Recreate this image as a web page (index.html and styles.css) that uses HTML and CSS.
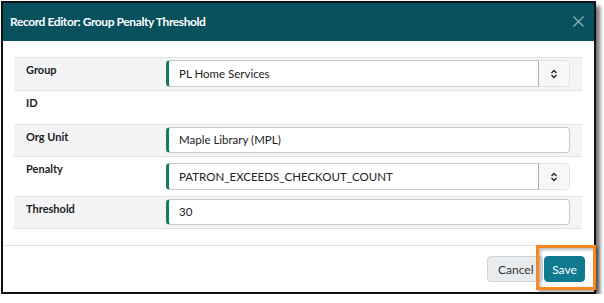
FILE: index.html
```html
<!DOCTYPE html>
<html lang="en">
<head>
  <meta charset="UTF-8" />
  <title>Record Editor</title>
  <link rel="stylesheet" href="styles.css">
</head>
<body>

<div class="dialog">
  <div class="dialog-header">
    <div class="dialog-title">Record Editor: Group Penalty Threshold</div>
    <svg class="close" width="11" height="11" viewBox="0 0 11 11">
      <path d="M0.5 0.5 L10.5 10.5 M10.5 0.5 L0.5 10.5" stroke="#8fb0b6" stroke-width="1.3" fill="none"/>
    </svg>
  </div>

  <div class="dialog-body">
    <div class="row shaded">
      <div class="label">Group</div>
      <div class="field">
        <div class="select">
          <div class="control">PL Home Services</div>
          <div class="spin">
            <svg width="8" height="10" viewBox="0 0 8 10">
              <path d="M1.5 4 L4 1.5 L6.5 4 M1.5 6 L4 8.5 L6.5 6" stroke="#222" stroke-width="1.4" fill="none"/>
            </svg>
          </div>
        </div>
      </div>
    </div>
    <div class="row tall">
      <div class="label">ID</div>
      <div class="field"></div>
    </div>
    <div class="row shaded short">
      <div class="label">Org Unit</div>
      <div class="field">
        <div class="control">Maple Library (MPL)</div>
      </div>
    </div>
    <div class="row penalty">
      <div class="label">Penalty</div>
      <div class="field">
        <div class="select">
          <div class="control">PATRON_EXCEEDS_CHECKOUT_COUNT</div>
          <div class="spin">
            <svg width="8" height="10" viewBox="0 0 8 10">
              <path d="M1.5 4 L4 1.5 L6.5 4 M1.5 6 L4 8.5 L6.5 6" stroke="#222" stroke-width="1.4" fill="none"/>
            </svg>
          </div>
        </div>
      </div>
    </div>
    <div class="row shaded short">
      <div class="label">Threshold</div>
      <div class="field">
        <div class="control">30</div>
      </div>
    </div>
  </div>

  <div class="dialog-footer">
    <button class="btn btn-cancel">Cancel</button>
    <div class="save-wrap">
      <button class="btn btn-save">Save</button>
      <span class="highlight"></span>
    </div>
  </div>
</div>

</body>
</html>
```

FILE: styles.css
```css
body {
  margin: 0;
  background: #fff;
  font-family: Lato, "Liberation Sans", sans-serif;
  color: #212529;
}

.dialog {
  box-sizing: border-box;
  width: 595px;
  height: 293px;
  margin: 1px 0 0 1px;
  border: 2px solid #111;
  background: #fff;
  box-shadow: 4px 5px 4px rgba(0, 0, 0, 0.55);
  display: flex;
  flex-direction: column;
}

.dialog-header {
  height: 38px;
  background-color: #07505d;
  display: flex;
  align-items: center;
  justify-content: space-between;
  padding: 0 10px 0 7px;
}

.dialog-title {
  color: #fff;
  font-weight: bold;
  font-size: 12px;
  letter-spacing: -0.4px;
  margin-top: -2px;
}

.close {
  margin-top: -1px;
}

.dialog-body {
  padding: 16px 12px 16px 11px;
}

.row {
  display: flex;
  border-top: 1px solid #dfe2e6;
  height: 32px;
  align-items: flex-start;
}

.row:last-child {
  border-bottom: 1px solid #dfe2e6;
}

.row.shaded {
  background-color: #f3f4f6;
}

.row.short {
  height: 31px;
}

.row.tall {
  height: 33px;
}

.row.penalty {
  height: 39px;
}

.label {
  width: 140px;
  padding: 5px 0 0 12px;
  font-weight: bold;
  font-size: 11px;
  color: #222;
}

.field {
  flex: 1;
  padding: 2px 12px 0 0;
}

.row.penalty .field {
  padding-top: 6px;
}

.select {
  display: flex;
}

.control {
  flex: 1;
  box-sizing: border-box;
  height: 27px;
  background: #fff;
  border: 1px solid #c5c9ce;
  border-left: 3px solid #15804f;
  border-radius: 4px;
  padding: 0 10px;
  font-size: 11.5px;
  line-height: 25px;
  color: #222;
}

.row.short .control {
  height: 26px;
  line-height: 24px;
}

.select .control {
  border-radius: 4px 0 0 4px;
  border-right-color: #a9aeb3;
}

.spin {
  width: 31px;
  box-sizing: border-box;
  height: 27px;
  background: #f6f7f8;
  border: 1px solid #e1e4e7;
  border-left: none;
  border-radius: 0 5px 5px 0;
  display: flex;
  align-items: center;
  justify-content: center;
}

.dialog-footer {
  flex: 1;
  border-top: 1px solid #dfe2e6;
  display: flex;
  justify-content: flex-end;
  align-items: center;
  padding: 0 9px 0 0;
  gap: 1px;
}

.btn {
  height: 26px;
  border-radius: 4px;
  font-family: inherit;
  font-size: 12px;
  padding: 0 10px;
  cursor: pointer;
}

.btn-cancel {
  background: #e9ecef;
  border: 1px solid #cfd3d7;
  color: #333;
  width: 56px;
}

.save-wrap {
  position: relative;
}

.btn-save {
  background: #0f7a90;
  border: 1px solid #0f7a90;
  color: #fff;
  width: 41px;
  padding: 0;
}

.highlight {
  position: absolute;
  left: -8px;
  top: -11px;
  right: -11px;
  bottom: -8px;
  border: 3px solid #f7891e;
  box-shadow: 2px 2px 3px rgba(0, 0, 0, 0.35), inset 2px 2px 3px rgba(0, 0, 0, 0.25);
  pointer-events: none;
}
```
